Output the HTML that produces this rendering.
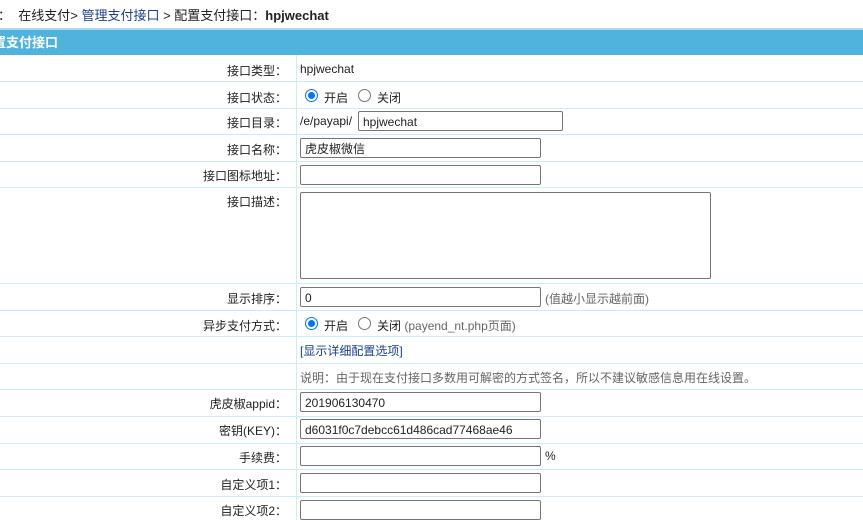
<!DOCTYPE html>
<html><head><meta charset="utf-8"><style>
body{margin:0;width:863px;height:520px;overflow:hidden;background:#fff;font-family:"Liberation Sans","Noto Sans CJK SC",sans-serif;font-size:12px;color:#222;position:relative}
.a{position:absolute;white-space:nowrap}
.h{position:absolute;left:0;width:863px;height:1px;background:#cfeaf8}
.lab{position:absolute;right:576px;white-space:nowrap;text-align:right}
.in{position:absolute;left:300px;width:241px;height:20px;border:1px solid #767676;border-radius:2px;box-sizing:border-box;font-size:12px;padding:3px 0 0 4px;line-height:14px}
.r{position:absolute;width:13px;height:13px;border:1px solid #767676;border-radius:50%;box-sizing:border-box}
.r.on{border:1px solid #0075ff}
.r.on::after{content:"";position:absolute;left:2px;top:2px;width:7px;height:7px;border-radius:50%;background:#0075ff}
</style></head><body>
<div class="a" style="left:-2px;top:5px;font-size:13px">：&nbsp;&nbsp;在线支付&gt; <span style="color:#1a3f8f">管理支付接口</span> &gt; 配置支付接口：<b>hpjwechat</b></div>
<div class="a" style="left:0;top:28px;width:863px;height:2px;background:#a9dcf2"></div>
<div class="a" style="left:-7px;top:30px;width:870px;height:25px;background:#4fb3de;color:#fff;font-weight:bold;font-size:13px;line-height:25px">置支付接口</div>
<div class="a" style="left:296px;top:55px;width:1px;height:465px;background:#cfeaf8"></div>
<div class="h" style="top:81px"></div><div class="h" style="top:108px"></div><div class="h" style="top:134px"></div><div class="h" style="top:161px"></div><div class="h" style="top:187px"></div><div class="h" style="top:283px"></div><div class="h" style="top:310px"></div><div class="h" style="top:336px"></div><div class="h" style="top:363px"></div><div class="h" style="top:389px"></div><div class="h" style="top:416px"></div><div class="h" style="top:443px"></div><div class="h" style="top:469px"></div><div class="h" style="top:496px"></div>

<div class="lab" style="top:62px">接口类型：</div><div class="a" style="left:300px;top:62px">hpjwechat</div>
<div class="lab" style="top:89px">接口状态：</div><div class="r on" style="left:305px;top:89px"></div><div class="a" style="left:324px;top:89px">开启</div><div class="r" style="left:358px;top:89px"></div><div class="a" style="left:377px;top:89px">关闭</div>
<div class="lab" style="top:114px">接口目录：</div><div class="a" style="left:300px;top:114px">/e/payapi/</div><div class="in" style="left:358px;top:111px;width:205px">hpjwechat</div>
<div class="lab" style="top:141px">接口名称：</div><div class="in" style="top:138px">虎皮椒微信</div>
<div class="lab" style="top:167px">接口图标地址：</div><div class="in" style="top:165px"></div>
<div class="lab" style="top:193px">接口描述：</div><div class="in" style="top:192px;width:411px;height:87px"></div>
<div class="lab" style="top:290px">显示排序：</div><div class="in" style="top:287px">0</div><div class="a" style="left:545px;top:290px;color:#666">(值越小显示越前面)</div>
<div class="lab" style="top:317px">异步支付方式：</div><div class="r on" style="left:305px;top:317px"></div><div class="a" style="left:324px;top:317px">开启</div><div class="r" style="left:358px;top:317px"></div><div class="a" style="left:377px;top:317px">关闭 <span style="color:#666">(payend_nt.php页面)</span></div>
<div class="a" style="left:300px;top:342px;color:#1a3f8f">[显示详细配置选项]</div>
<div class="a" style="left:300px;top:369px;color:#666">说明：由于现在支付接口多数用可解密的方式签名，所以不建议敏感信息用在线设置。</div>
<div class="lab" style="top:395px">虎皮椒appid：</div><div class="in" style="top:392px">201906130470</div>
<div class="lab" style="top:422px">密钥(KEY)：</div><div class="in" style="top:419px">d6031f0c7debcc61d486cad77468ae46</div>
<div class="lab" style="top:449px">手续费：</div><div class="in" style="top:446px"></div><div class="a" style="left:545px;top:449px">%</div>
<div class="lab" style="top:476px">自定义项1：</div><div class="in" style="top:473px"></div>
<div class="lab" style="top:502px">自定义项2：</div><div class="in" style="top:500px"></div>
</body></html>
